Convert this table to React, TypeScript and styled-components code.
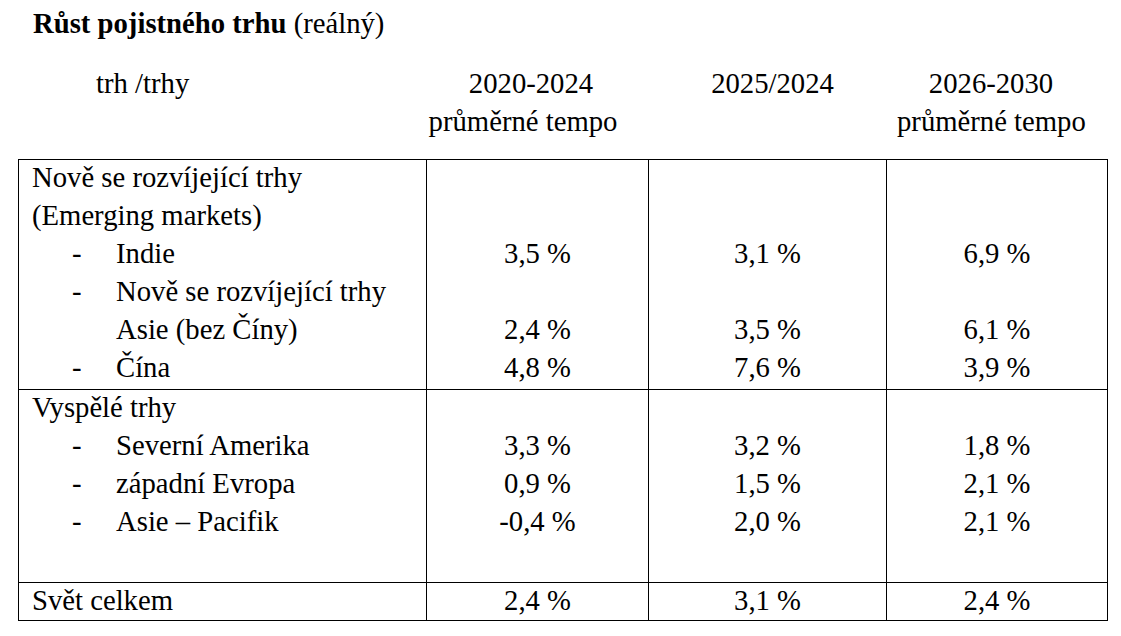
import React from 'react';
import styled, { createGlobalStyle } from 'styled-components';

const GlobalStyle = createGlobalStyle`
  html, body {
    margin: 0;
    padding: 0;
    background: #ffffff;
  }
`;

const Page = styled.div`
  font-family: "Liberation Serif", "Times New Roman", serif;
  font-size: 28.7px;
  line-height: 38px;
  color: #000000;
  padding: 4px 0 0 18px;
  width: 1090px;
`;

const Title = styled.div`
  padding-left: 15px;
  white-space: nowrap;
`;

const Bold = styled.span`
  font-weight: 700;
`;

const HeaderGrid = styled.div`
  display: grid;
  grid-template-columns: 380px 250px 249px 188px;
  margin-top: 22px;
  height: 76px;
`;

const HeaderCell = styled.div<{ $first?: boolean }>`
  text-align: ${({ $first }) => ($first ? 'left' : 'center')};
  padding-left: ${({ $first }) => ($first ? '78px' : '0')};
  white-space: nowrap;
`;

const HeaderLine = styled.div<{ $shift?: number }>`
  padding-left: ${({ $shift }) => $shift ?? 0}px;
`;

const Table = styled.div`
  margin-top: 19px;
  width: 1090px;
  box-sizing: border-box;
  border: 1px solid #000000;
`;

const Section = styled.div<{ $height: number; $last?: boolean }>`
  display: grid;
  grid-template-columns: 408px 222px 238px 220px;
  height: ${({ $height }) => $height}px;
  border-bottom: ${({ $last }) => ($last ? 'none' : '1px solid #000000')};
`;

const Cell = styled.div<{ $label?: boolean; $last?: boolean }>`
  box-sizing: border-box;
  border-right: ${({ $last }) => ($last ? 'none' : '1px solid #000000')};
  padding-left: ${({ $label }) => ($label ? '13px' : '0')};
  text-align: ${({ $label }) => ($label ? 'left' : 'center')};
  white-space: nowrap;
`;

const Lines = styled.div`
  margin-top: -2px;
`;

const Line = styled.div`
  height: 38px;
`;

const Item = styled.div<{ $continued?: boolean }>`
  display: flex;
  height: 38px;
  padding-left: ${({ $continued }) => ($continued ? '84px' : '40px')};
`;

const Dash = styled.span`
  display: inline-block;
  width: 44px;
`;

type LabelLine = { text: string; kind: 'plain' | 'item' | 'cont' };

type SectionData = {
  height: number;
  labels: LabelLine[];
  values: [string, string, string][];
};

const sections: SectionData[] = [
  {
    height: 229,
    labels: [
      { text: 'Nově se rozvíjející trhy', kind: 'plain' },
      { text: '(Emerging markets)', kind: 'plain' },
      { text: 'Indie', kind: 'item' },
      { text: 'Nově se rozvíjející trhy', kind: 'item' },
      { text: 'Asie (bez Číny)', kind: 'cont' },
      { text: 'Čína', kind: 'item' },
    ],
    values: [
      ['', '', ''],
      ['', '', ''],
      ['3,5 %', '3,1 %', '6,9 %'],
      ['', '', ''],
      ['2,4 %', '3,5 %', '6,1 %'],
      ['4,8 %', '7,6 %', '3,9 %'],
    ],
  },
  {
    height: 192,
    labels: [
      { text: 'Vyspělé trhy', kind: 'plain' },
      { text: 'Severní Amerika', kind: 'item' },
      { text: 'západní Evropa', kind: 'item' },
      { text: 'Asie – Pacifik', kind: 'item' },
    ],
    values: [
      ['', '', ''],
      ['3,3 %', '3,2 %', '1,8 %'],
      ['0,9 %', '1,5 %', '2,1 %'],
      ['-0,4 %', '2,0 %', '2,1 %'],
    ],
  },
  {
    height: 37,
    labels: [{ text: 'Svět celkem', kind: 'plain' }],
    values: [['2,4 %', '3,1 %', '2,4 %']],
  },
];

const LabelRow = ({ line }: { line: LabelLine }) => {
  if (line.kind === 'plain') return <Line>{line.text}</Line>;
  if (line.kind === 'cont') return <Item $continued>{line.text}</Item>;
  return (
    <Item>
      <Dash>-</Dash>
      {line.text}
    </Item>
  );
};

const App = () => {
  return (
    <>
      <GlobalStyle />
      <Page>
        <Title>
          <Bold>Růst pojistného trhu</Bold> (reálný)
        </Title>
        <HeaderGrid>
          <HeaderCell $first>trh /trhy</HeaderCell>
          <HeaderCell>
            <HeaderLine $shift={16}>2020-2024</HeaderLine>
            <HeaderLine>průměrné tempo</HeaderLine>
          </HeaderCell>
          <HeaderCell>2025/2024</HeaderCell>
          <HeaderCell>
            <HeaderLine>2026-2030</HeaderLine>
            <HeaderLine>průměrné tempo</HeaderLine>
          </HeaderCell>
        </HeaderGrid>
        <Table>
          {sections.map((section, si) => (
            <Section key={si} $height={section.height} $last={si === sections.length - 1}>
              <Cell $label>
                <Lines>
                  {section.labels.map((line, li) => (
                    <LabelRow key={li} line={line} />
                  ))}
                </Lines>
              </Cell>
              {[0, 1, 2].map((col) => (
                <Cell key={col} $last={col === 2}>
                  <Lines>
                    {section.values.map((row, ri) => (
                      <Line key={ri}>{row[col]}</Line>
                    ))}
                  </Lines>
                </Cell>
              ))}
            </Section>
          ))}
        </Table>
      </Page>
    </>
  );
};

export default App;
